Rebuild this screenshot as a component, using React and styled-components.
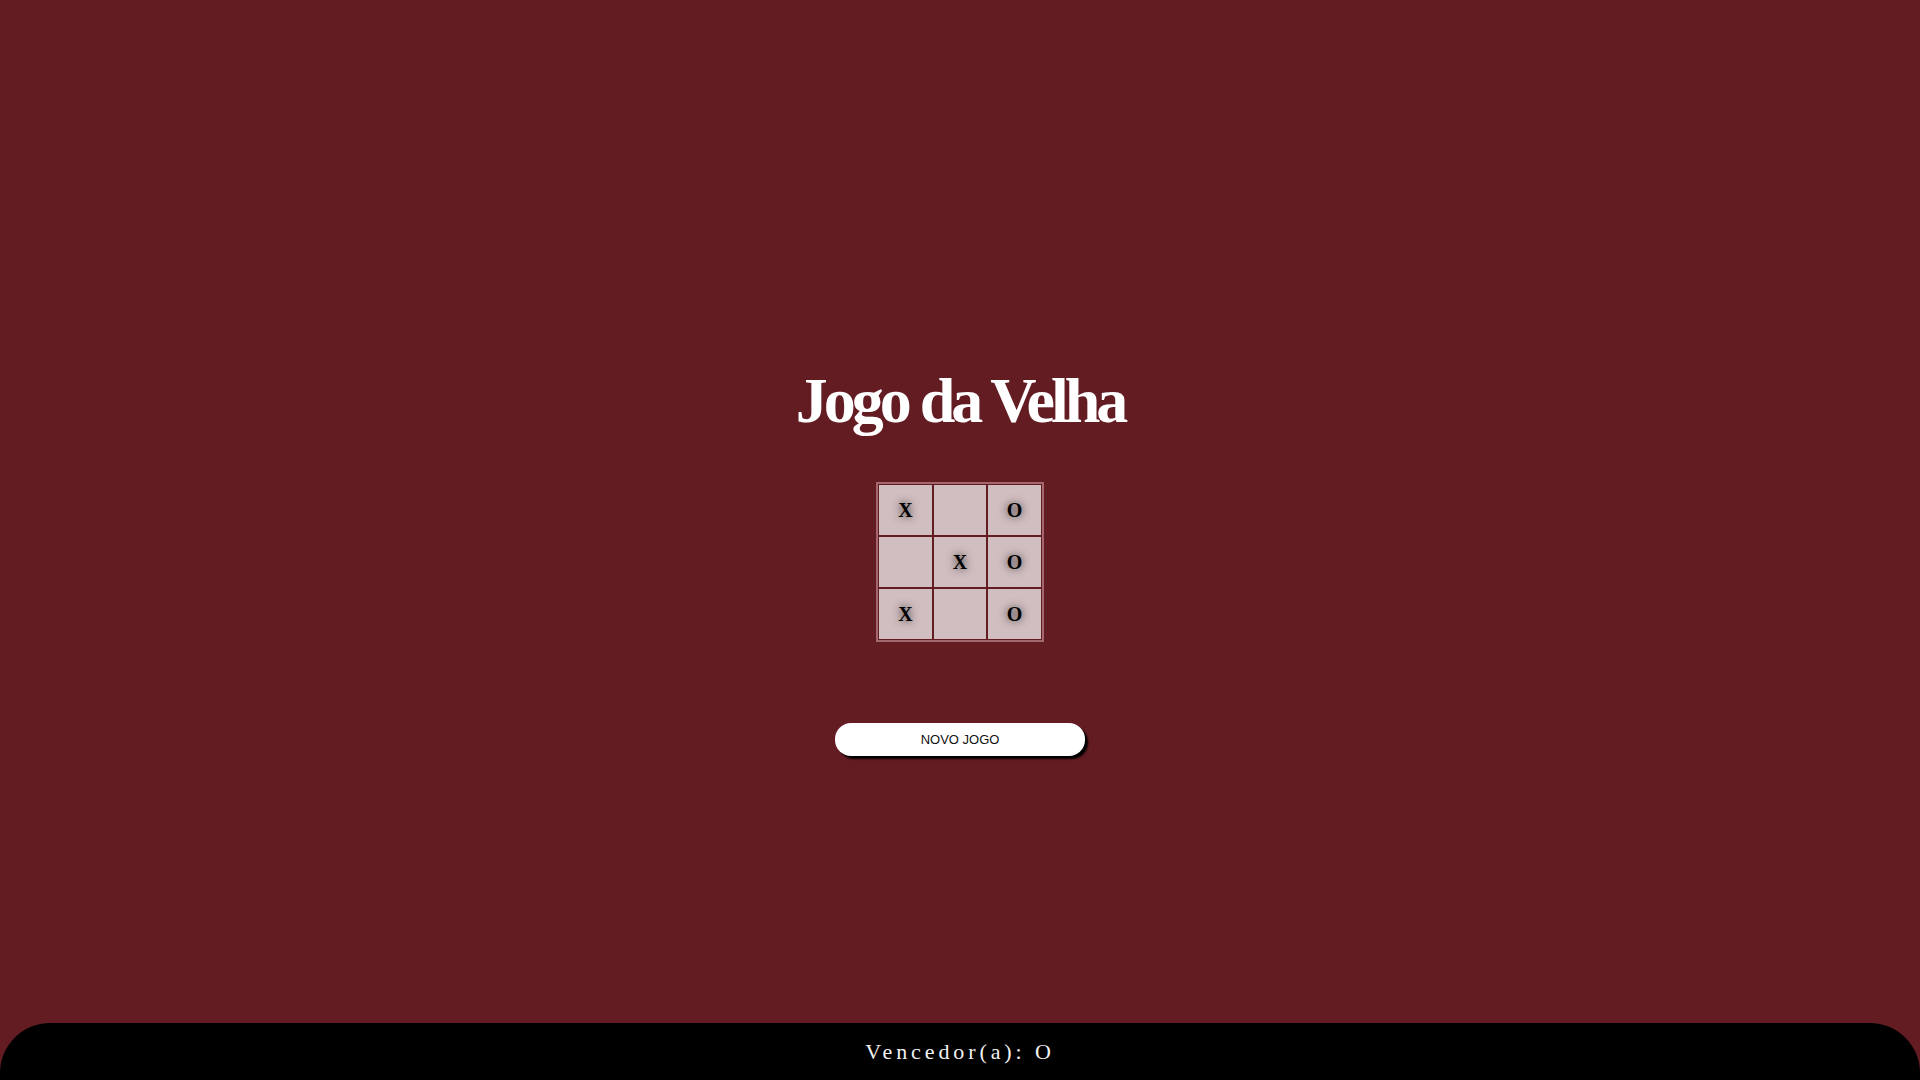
import React, { useState } from 'react';
import styled, { createGlobalStyle } from "styled-components";

const GlobalStyle = createGlobalStyle`
	html, body {
		margin: 0;
		padding: 0;
		background-color: #641c23;
	}
`

const Page = styled.div`
	min-height: 100vh;
	display: flex;
	flex-direction: column;
	background-color: #641c23;
`

const Main = styled.main`
	flex: 1;
	display: flex;
	flex-direction: column;
	align-items: center;
	padding-top: 364px;
`

const Title = styled.h1`
	margin: 0;
	font-family: "Liberation Serif", serif;
	font-size: 64px;
	line-height: 74px;
	font-weight: bold;
	letter-spacing: -4px;
	color: #ffffff;
`

const Board = styled.div`
	display: grid;
	grid-template-columns: repeat(3, 52.5px);
	grid-auto-rows: 50px;
	gap: 2px;
	padding: 1px;
	margin-top: 44px;
	border: 2px solid #a3686e;
	background-color: #641c23;
`

const Cell = styled.div`
	display: flex;
	align-items: center;
	justify-content: center;
	background-color: #d1bec0;
	font-family: "Liberation Serif", serif;
	font-weight: bold;
	font-size: 20px;
	color: #000000;
	text-shadow: 0 0 8px rgba(0, 0, 0, 0.85);
	cursor: pointer;
`

const NewGame = styled.button`
	width: 250px;
	height: 33px;
	margin-top: 81px;
	border: none;
	border-radius: 16px;
	background-color: #ffffff;
	box-shadow: 3px 3px 2px #000000;
	font-family: "Liberation Sans", Arial, sans-serif;
	font-size: 13px;
	color: #111111;
	cursor: pointer;
`

const Footer = styled.footer`
	height: 57px;
	display: flex;
	align-items: center;
	justify-content: center;
	background-color: #000000;
	border-radius: 50px 50px 0 0;
	font-family: "Liberation Serif", serif;
	font-size: 22px;
	letter-spacing: 3.9px;
	color: #f2f2f2;
`

const initial = ["X", "", "O", "", "X", "O", "X", "", "O"]

const App = () => {
	const [cells, setCells] = useState(initial)
	const [winner, setWinner] = useState("O")

	return (
		<Page>
			<GlobalStyle />
			<Main>
				<Title>Jogo da Velha</Title>
				<Board>
					{cells.map((value, id) => (
						<Cell key={id}>{value}</Cell>
					))}
				</Board>
				<NewGame onClick={() => { setCells(Array(9).fill("")); setWinner("") }}>NOVO JOGO</NewGame>
			</Main>
			<Footer>Vencedor(a): {winner}</Footer>
		</Page>
	);
}

export default App;
